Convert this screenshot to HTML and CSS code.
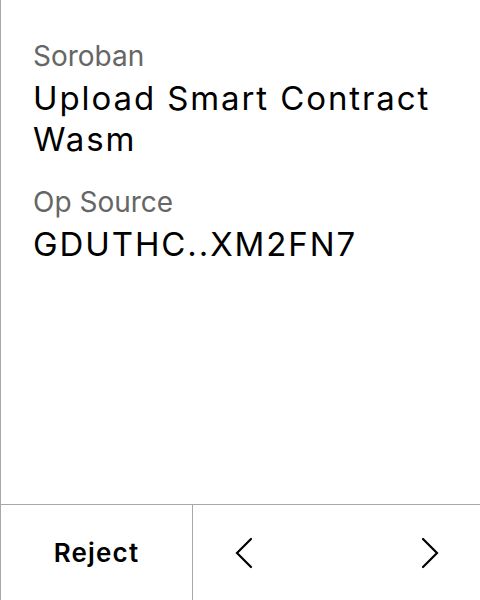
FILE: index.html
```html
<!DOCTYPE html>
<html>
<head>
<meta charset="utf-8">
<link rel="stylesheet" href="styles.css">
</head>
<body>
<div class="screen">
  <main class="content">
    <div class="label">Soroban</div>
    <div class="value title">Upload Smart Contract Wasm</div>
    <div class="label second">Op Source</div>
    <div class="value">GDUTHC..XM2FN7</div>
  </main>
  <footer class="actions">
    <div class="reject">Reject</div>
    <div class="nav">
      <svg class="chev" width="18" height="32" viewBox="0 0 18 32"><path d="M16 2 L2 16 L16 30" fill="none" stroke="#000" stroke-width="2.2" stroke-linecap="round" stroke-linejoin="miter"/></svg>
      <svg class="chev" width="18" height="32" viewBox="0 0 18 32"><path d="M2 2 L16 16 L2 30" fill="none" stroke="#000" stroke-width="2.2" stroke-linecap="round" stroke-linejoin="miter"/></svg>
    </div>
  </footer>
</div>
</body>
</html>
```
FILE: styles.css
```css
html, body {
  margin: 0;
  padding: 0;
  background: #fff;
}
.screen {
  width: 480px;
  height: 600px;
  box-sizing: border-box;
  border-left: 1px solid #a8a8a8;
  display: flex;
  flex-direction: column;
  font-family: Inter, "Noto Sans", sans-serif;
  font-optical-sizing: none;
  font-variation-settings: "opsz" 14;
  color: #000;
}
.content {
  flex: 1;
  padding: 38px 20px 0 32px;
}
.label {
  font-size: 28px;
  line-height: 36px;
  color: #666;
}
.label.second {
  margin-top: 24px;
}
.value {
  font-size: 33px;
  line-height: 41px;
  letter-spacing: 1.9px;
  margin-top: 4px;
}
.actions {
  height: 96px;
  border-top: 1px solid #a8a8a8;
  box-sizing: border-box;
  display: flex;
}
.reject {
  width: 191px;
  border-right: 1px solid #a8a8a8;
  display: flex;
  align-items: center;
  justify-content: center;
  font-size: 26px;
  font-weight: 600;
  letter-spacing: 1.2px;
}
.nav {
  flex: 1;
  display: flex;
  align-items: center;
  justify-content: space-between;
  padding: 0 41px 0 42px;
}
```
